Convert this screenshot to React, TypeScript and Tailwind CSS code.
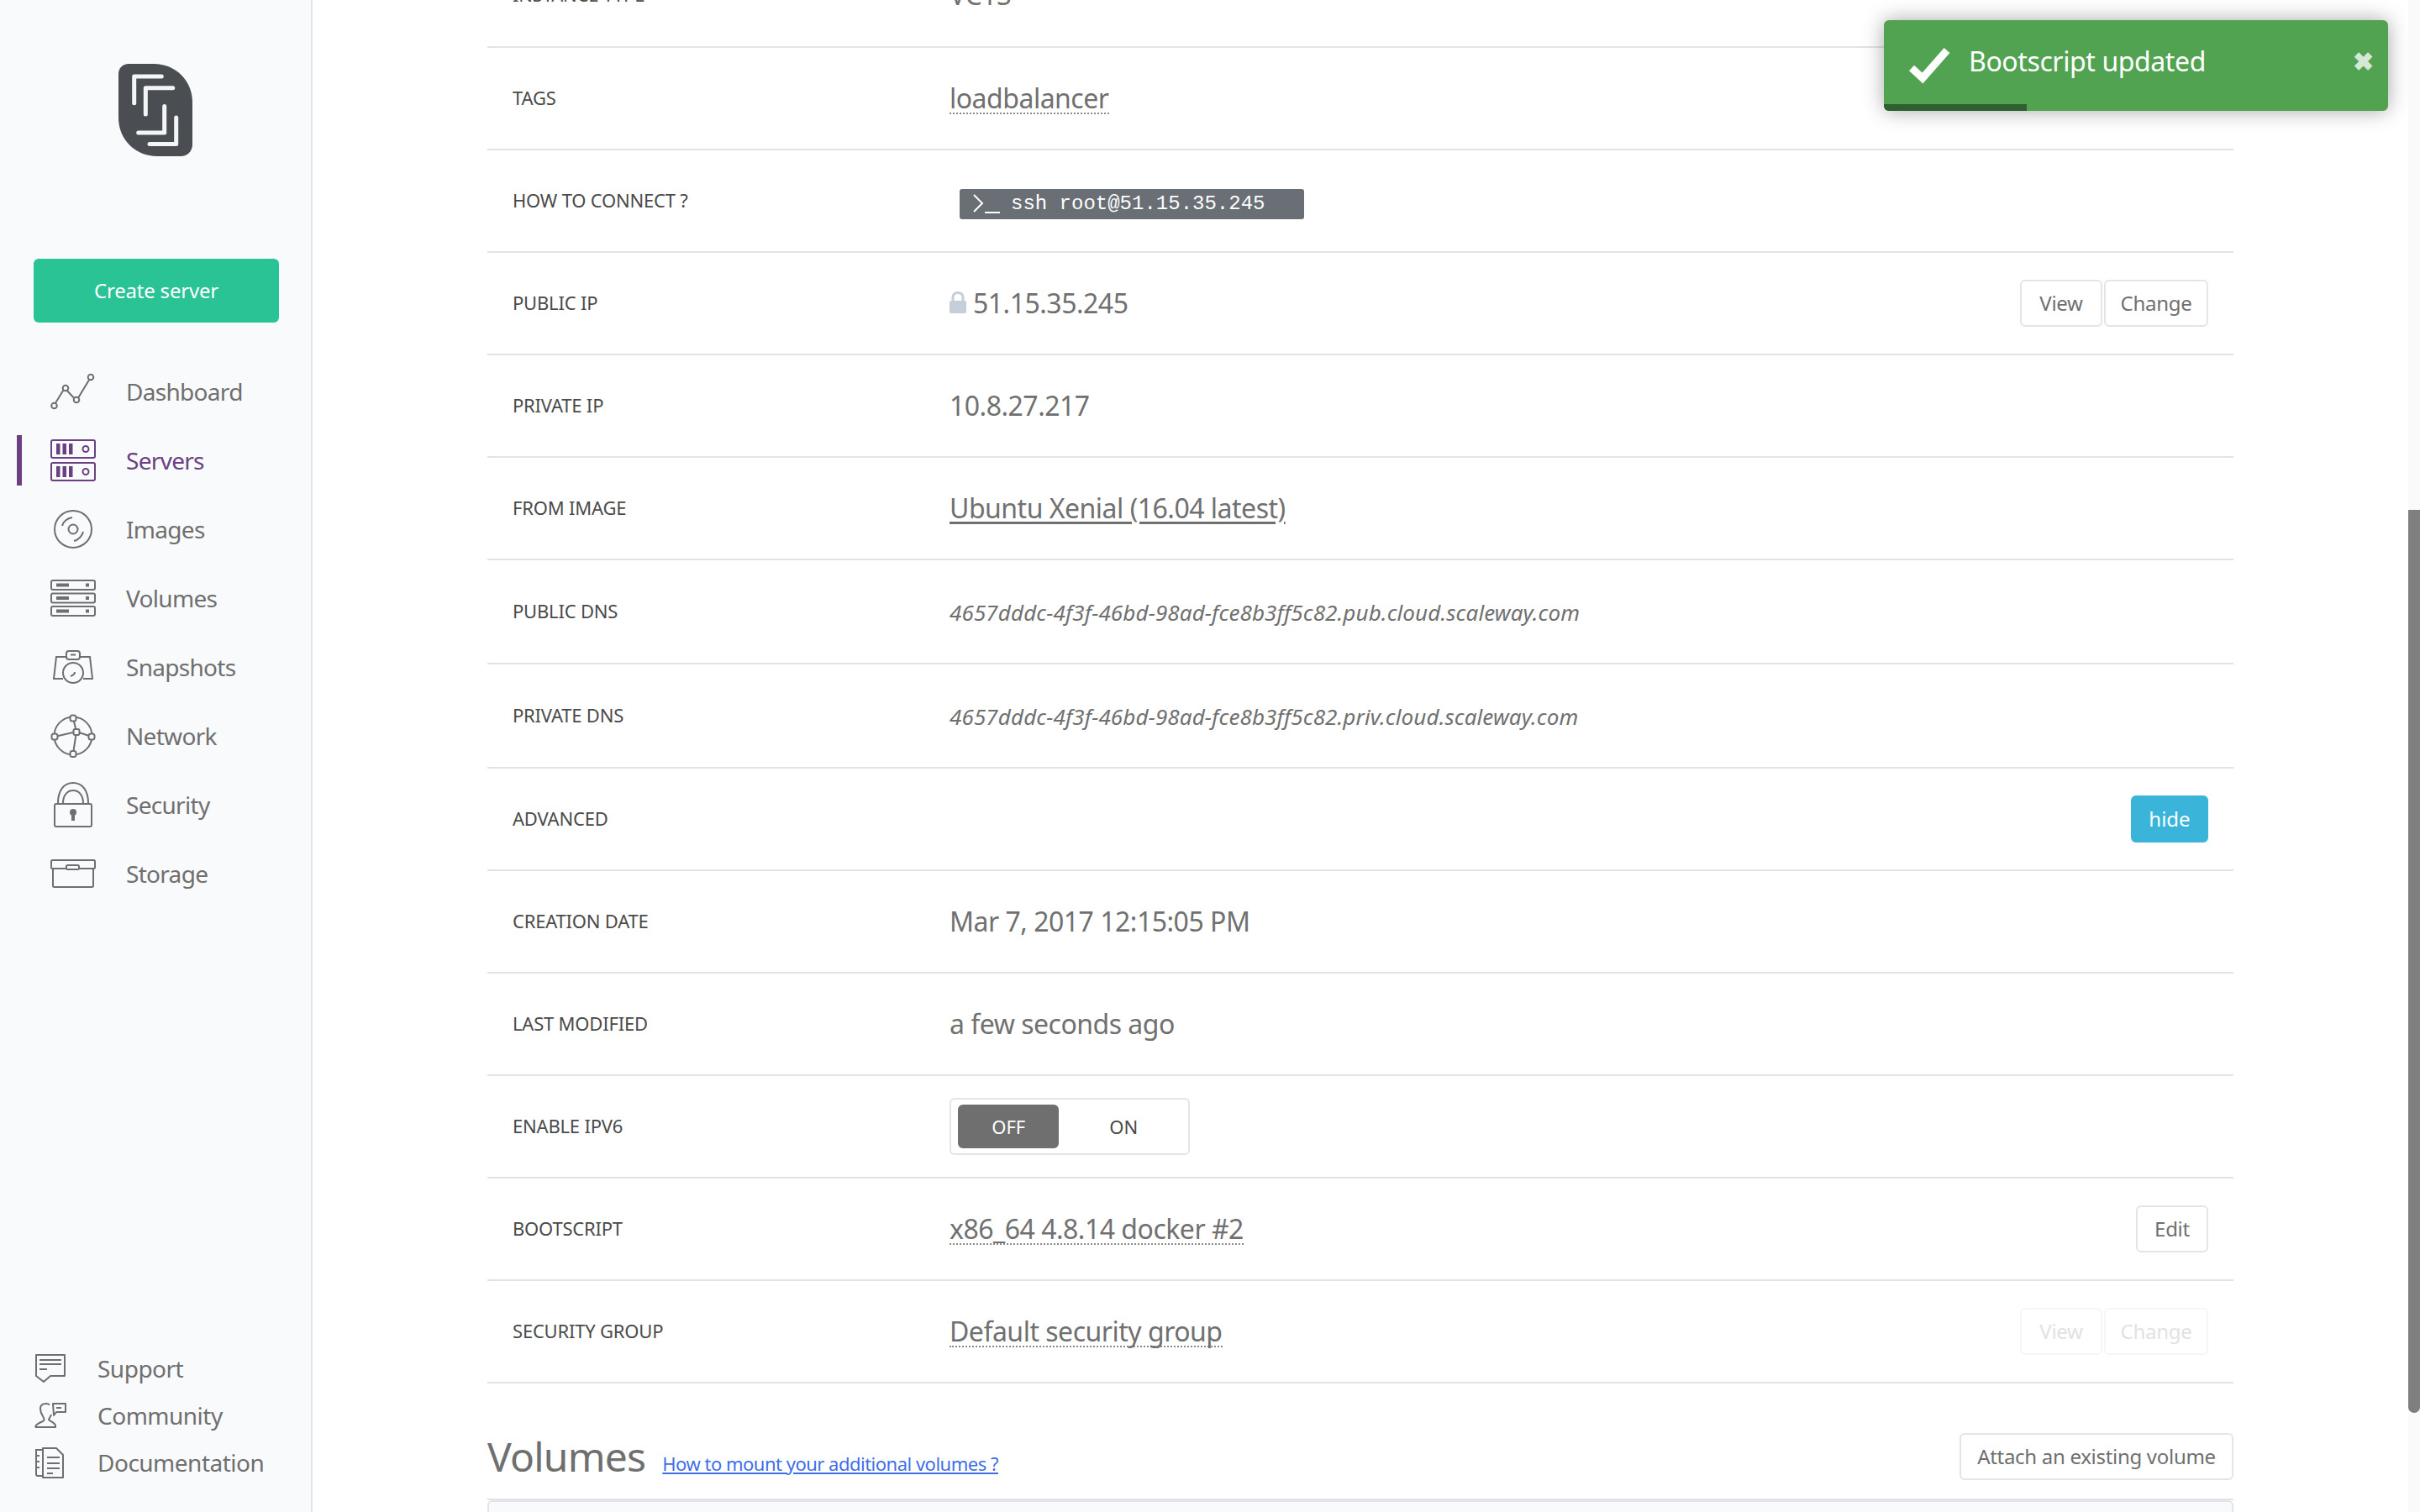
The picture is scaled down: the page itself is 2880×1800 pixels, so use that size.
import React from "react";

const ic = "fill-none stroke-[#6f6f6f] stroke-[2]";

function Logo() {
  return (
    <svg width="88" height="110" viewBox="0 0 88 110" className="block">
      <path d="M12 0H42C68 0 88 20 88 46V96C88 104 82 110 74 110H46C20 110 0 90 0 64V12C0 5 5 0 12 0Z" fill="#4a4d52" />
      <g fill="none" stroke="#f4f5f7" strokeWidth="5" strokeLinecap="round" strokeLinejoin="round">
        <path d="M18.700 46.700V15H51.300" />
        <path d="M32.300 60V28.700H64.700" />
        <path d="M54.700 50.500V82H23.700" />
        <path d="M68.700 64V95.600H37" />
      </g>
    </svg>
  );
}

const navIcons: Record<string, React.ReactNode> = {
  Dashboard: (
    <svg width="54" height="44" viewBox="0 0 54 44" className={ic}>
      <path d="M4 39 17 18 31 33 48 5" />
      <circle cx="4.500" cy="39" r="3.300" className="fill-[#f9fafc]" />
      <circle cx="18" cy="18" r="3.300" className="fill-[#f9fafc]" />
      <circle cx="31" cy="32" r="3.300" className="fill-[#f9fafc]" />
      <circle cx="48" cy="5" r="3.300" className="fill-[#f9fafc]" />
    </svg>
  ),
  Servers: (
    <svg width="54" height="50" viewBox="0 0 54 50" className="fill-none stroke-[#6a4082] stroke-2">
      <rect x="1" y="1" width="52" height="21" rx="2" />
      <rect x="1" y="28" width="52" height="21" rx="2" />
      <path d="M7 5h4.500v13H7zM14.500 5h4.500v13h-4.500zM22 5h4.500v13H22zM7 32h4.500v13H7zM14.500 32h4.500v13h-4.500zM22 32h4.500v13H22z" className="fill-[#6a4082] stroke-0" />
      <circle cx="42" cy="11.500" r="3.500" />
      <circle cx="42" cy="38.500" r="3.500" />
    </svg>
  ),
  Images: (
    <svg width="54" height="46" viewBox="0 0 54 46" className={ic}>
      <circle cx="27" cy="23" r="22" />
      <circle cx="27" cy="23" r="5.500" />
      <path d="M14 19C15 14 20 10 26 9M39 26C38 31 33 36 28 37" />
    </svg>
  ),
  Volumes: (
    <svg width="54" height="44" viewBox="0 0 54 44" className={ic}>
      <rect x="1" y="1" width="52" height="11" rx="2" />
      <rect x="1" y="16.500" width="52" height="11" rx="2" />
      <rect x="1" y="32" width="52" height="11" rx="2" />
      <path d="M7 4.500h15v4H7zM7 20h15v4H7zM7 35.500h15v4H7zM42 4.500h4v4h-4zM42 20h4v4h-4zM42 35.500h4v4h-4z" className="fill-[#6f6f6f] stroke-0" />
    </svg>
  ),
  Snapshots: (
    <svg width="54" height="40" viewBox="0 0 54 40" className={ic}>
      <path d="M19 8H7L4 34H15M35 8h12l3 26H39" />
      <rect x="19" y="1" width="16" height="10" rx="3" className="fill-[#f9fafc]" />
      <path d="M24 5.500h6" />
      <circle cx="27" cy="27" r="12" />
      <path d="M24 31c3-1 5-3 5-5" />
    </svg>
  ),
  Network: (
    <svg width="54" height="52" viewBox="0 0 54 52" className={ic}>
      <circle cx="27" cy="26" r="22.500" />
      <path d="M5 27 31 21 27 47M27 5 31 21 49 27" />
      <rect x="23.500" y="1.500" width="7" height="7" rx="2.500" className="fill-[#f9fafc]" />
      <rect x="27.500" y="18" width="7" height="7" rx="2" className="fill-[#f9fafc]" />
      <rect x="1.500" y="23.500" width="7" height="7" rx="2.500" className="fill-[#f9fafc]" />
      <rect x="45.500" y="23.500" width="7" height="7" rx="2.500" className="fill-[#f9fafc]" />
      <rect x="23.500" y="44" width="7" height="7" rx="2.500" className="fill-[#f9fafc]" />
    </svg>
  ),
  Security: (
    <svg width="54" height="54" viewBox="0 0 54 54" className={ic}>
      <rect x="5" y="26" width="44" height="27" rx="2" />
      <path d="M9 25C9 10 16 1 27 1s18 9 18 24" />
      <path d="M15 25c0-9 5-15 12-15s12 6 12 15" />
      <circle cx="27" cy="36" r="4" className="fill-[#6f6f6f] stroke-0" />
      <path d="M25 37h4v9h-4z" className="fill-[#6f6f6f] stroke-0" />
    </svg>
  ),
  Storage: (
    <svg width="54" height="34" viewBox="0 0 54 34" className={ic}>
      <rect x="1" y="1" width="52" height="10" rx="1.500" />
      <path d="M3 11V31.500C3 32.500 4 33 5 33H49C50 33 51 32.500 51 31.500V11" />
      <rect x="19" y="7" width="15" height="5" rx="1.500" className="fill-[#f9fafc]" />
    </svg>
  ),
};

const nav = ["Dashboard", "Servers", "Images", "Volumes", "Snapshots", "Network", "Security", "Storage"];

const bottomIcons: Record<string, React.ReactNode> = {
  Support: (
    <svg width="38" height="36" viewBox="0 0 38 36" className={ic}>
      <path d="M2 2H36V27H19L11 34 2 27Z" strokeLinejoin="round" />
      <path d="M6 8H32M6 13H32M6 19H15" />
    </svg>
  ),
  Community: (
    <svg width="38" height="32" viewBox="0 0 38 32" className={ic}>
      <path d="M1 30C1 27 5 25 10 23C12 22 12 20 10 17C8 14 7 11 7 8C7 4 10 2 14 2C15.500 2 17 2.500 18 3.500M20 15C19 18 17 20 17 21C18 23 24 24 25 28V30H1" />
      <path d="M22 2H37V12H26L23 16Z" strokeLinejoin="round" />
      <path d="M26 7h6" />
    </svg>
  ),
  Documentation: (
    <svg width="38" height="38" viewBox="0 0 38 38" className={ic}>
      <path d="M10 4H2V33C2 34 3 35 4 35H9" />
      <path d="M10 2H26L34 10V37H10Z" strokeLinejoin="round" />
      <path d="M15 13H30M15 20H30M15 26H30M15 32H22M2 11h4M2 18h4M2 25h4" />
    </svg>
  ),
};

function Sidebar() {
  return (
    <aside className="w-[372px] h-full shrink-0 bg-[#f9fafc] border-r-2 border-[#e3e4e8] flex flex-col text-[#6f6f6f]">
      <div className="pt-[76px] flex justify-center">
        <Logo />
      </div>
      <button className="mt-[122px] ml-[40px] w-[292px] h-[76px] rounded-[6px] bg-[#29c396] text-white text-[24px] tracking-[-0.2px]">Create server</button>
      <nav className="mt-[41px] flex flex-col">
        {nav.map((n) => (
          <div key={n} className="relative h-[82px] flex items-center pl-[60px]">
            {n === "Servers" && <span className="absolute left-[20px] top-[11px] w-[6px] h-[60px] bg-[#6a4082]" />}
            <span className="w-[54px] flex justify-center shrink-0">{navIcons[n]}</span>
            <span className={"ml-[36px] -mt-[1px] text-[28px] tracking-[-0.7px] " + (n === "Servers" ? "text-[#6a4082]" : "")}>{n}</span>
          </div>
        ))}
      </nav>
      <div className="mt-auto pb-[31px] flex flex-col">
        {["Support", "Community", "Documentation"].map((n) => (
          <div key={n} className="h-[56px] flex items-center pl-[41px]">
            <span className="w-[38px] flex justify-center shrink-0">{bottomIcons[n]}</span>
            <span className="ml-[37px] text-[28px] tracking-[-0.5px]">{n}</span>
          </div>
        ))}
      </div>
    </aside>
  );
}

function Row({ label, h = 122, children, right }: { label: string; h?: number; children?: React.ReactNode; right?: React.ReactNode }) {
  return (
    <div style={{ height: h }} className="flex items-center border-b-2 border-[#e3e3e3] pl-[30px] pr-[30px]">
      <div className="w-[520px] shrink-0 -mt-[2px] text-[22px] tracking-[-0.2px] uppercase text-[#4a4a4a]">{label}</div>
      <div className="flex-1 text-[32px] tracking-[-0.5px] text-[#707070]">{children}</div>
      {right}
    </div>
  );
}

function Btn({ children, faded, className = "" }: { children: React.ReactNode; faded?: boolean; className?: string }) {
  return (
    <button className={"h-[56px] rounded-[6px] border-2 text-[24px] tracking-[-0.3px] " + (faded ? "border-[#f6f6f6] text-[#e2e2e2] " : "border-[#e5e5e5] text-[#6f6f6f] ") + className}>
      {children}
    </button>
  );
}

function Dotted({ children }: { children: React.ReactNode }) {
  return <span className="border-b-2 border-dotted border-[#8a8a8a] leading-[35px] inline-block">{children}</span>;
}

function ViewChange({ faded }: { faded?: boolean }) {
  return (
    <div className="flex gap-[2px]">
      <Btn faded={faded} className="w-[98px]">View</Btn>
      <Btn faded={faded} className="w-[124px]">Change</Btn>
    </div>
  );
}

function Rows() {
  return (
    <>
      <Row label="Tags"><Dotted>loadbalancer</Dotted></Row>
      <Row label="How to connect ?">
        <div className="ml-[12px] mt-[8px] w-[410px] h-[36px] rounded-[3px] bg-[#6a6e75] text-white text-[24px] tracking-normal flex items-center pl-[16px] font-['Liberation_Mono',monospace]">
          <svg width="32" height="24" viewBox="0 0 32 24" className="fill-none stroke-white stroke-2 mr-[13px]">
            <path d="M1 1 11 11 1 21M14 22H32" />
          </svg>
          ssh root@51.15.35.245
        </div>
      </Row>
      <Row label="Public IP" right={<ViewChange />}>
        <span className="inline-flex items-center">
          <svg width="20" height="26" viewBox="0 0 20 26" className="mr-[8px] -mt-[2px]">
            <path d="M4 12V7C4 3.500 6.500 1.500 10 1.500S16 3.500 16 7V12" fill="none" stroke="#c5ced9" strokeWidth="3" />
            <rect x="0" y="11" width="20" height="15" rx="2" fill="#c5ced9" />
          </svg>
          51.15.35.245
        </span>
      </Row>
      <Row label="Private IP">10.8.27.217</Row>
      <Row label="From image"><span className="underline underline-offset-[4px]">Ubuntu Xenial (16.04 latest)</span></Row>
      <Row label="Public DNS" h={124}><span className="italic text-[26px] tracking-[0.12px] pt-[2px] block">4657dddc-4f3f-46bd-98ad-fce8b3ff5c82.pub.cloud.scaleway.com</span></Row>
      <Row label="Private DNS" h={124}><span className="italic text-[26px] tracking-[0.12px] pt-[2px] block">4657dddc-4f3f-46bd-98ad-fce8b3ff5c82.priv.cloud.scaleway.com</span></Row>
      <Row label="Advanced" right={<button className="w-[92px] h-[56px] rounded-[6px] bg-[#3bb4da] text-white text-[24px]">hide</button>} />
      <Row label="Creation date">Mar 7, 2017 12:15:05 PM</Row>
      <Row label="Last modified">a few seconds ago</Row>
      <Row label="Enable IPv6">
        <div className="w-[286px] h-[68px] rounded-[6px] border-2 border-[#e5e5e5] flex items-center pl-[8px] text-[22px] tracking-normal">
          <span className="w-[124px] h-[52px] rounded-[6px] bg-[#6f6f6f] text-white flex items-center justify-center">OFF</span>
          <span className="w-[158px] text-center text-[#4a4a4a]">ON</span>
        </div>
      </Row>
      <Row label="Bootscript" right={<Btn className="w-[86px]">Edit</Btn>}><Dotted>x86_64 4.8.14 docker #2</Dotted></Row>
      <Row label="Security group" right={<ViewChange faded />}><Dotted>Default security group</Dotted></Row>
      <div className="flex items-center h-[137px] pt-[37px]">
        <h2 className="text-[48px] tracking-[-0.8px] text-[#6f6f6f]">Volumes</h2>
        <a className="ml-[20px] mt-[16px] text-[22px] tracking-[-0.5px] text-[#3f6fe8] underline">How to mount your additional volumes ?</a>
        <Btn className="ml-auto w-[326px]">Attach an existing volume</Btn>
      </div>
      <div className="border-t-2 border-[#e3e4e8]">
        <div className="h-[40px] bg-[#f9fafc] border-2 border-[#e3e4e8] rounded-t-[6px]" />
      </div>
    </>
  );
}

export default function App() {
  return (
    <div className="relative w-[2880px] h-[1800px] overflow-hidden bg-white flex font-['Noto_Sans',sans-serif]">
      <Sidebar />
      <div className="flex-1 min-w-0 h-full overflow-hidden pl-[208px] pr-[208px]">
        <div className="-mt-[67px]">
          <Row label="Instance type" h={124}>VC1S</Row>
          <Rows />
        </div>
      </div>
      <div className="w-[14px] h-full shrink-0 bg-[#f9fafc] pt-[607px]">
        <div className="h-[1075px] rounded-b-full bg-[#7f7f7f]" />
      </div>
      <div className="absolute left-[2242px] top-[24px] w-[600px] h-[108px] rounded-[6px] overflow-hidden bg-[#51a351] shadow-[0_0_24px_rgba(0,0,0,0.35)] text-white">
        <div className="flex items-center h-[72px] pt-[26px]">
          <svg width="52" height="46" viewBox="0 0 52 46" className="ml-[28px] mt-[8px] shrink-0">
            <path d="M5 27 18 39 47 6" fill="none" stroke="white" strokeWidth="9" />
          </svg>
          <span className="ml-[21px] text-[32px] tracking-[-0.4px]">Bootscript updated</span>
          <span className="ml-auto mr-[17px] -mt-[2px] text-[30px] font-bold text-[#d5e8d5]">✖</span>
        </div>
        <div className="absolute left-0 bottom-0 w-[170px] h-[8px] bg-[#2f5f2f]" />
      </div>
    </div>
  );
}
